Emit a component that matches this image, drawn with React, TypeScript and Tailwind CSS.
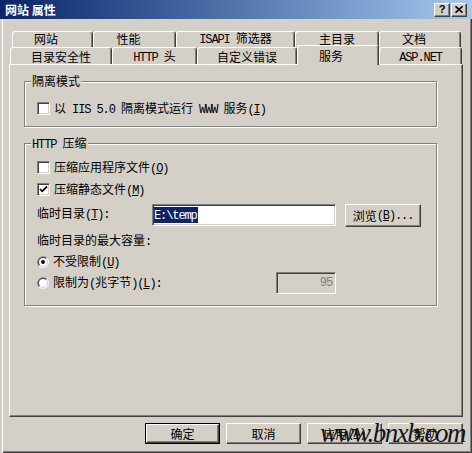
import React from "react";

const MONO = "font-['Liberation_Mono',monospace] text-[12px] tracking-[-1.1px]";

function mn(seg: string) {
  const i = seg.indexOf("&");
  if (i < 0) return seg;
  return (
    <>
      {seg.slice(0, i)}
      <u className="underline decoration-1 underline-offset-[1px]">{seg[i + 1]}</u>
      {seg.slice(i + 2)}
    </>
  );
}

function T({ s }: { s: string }) {
  const parts = s.match(/[\x00-\xff]+|[^\x00-\xff]+/g) || [];
  return (
    <>
      {parts.map((p, k) =>
        /^[\x00-\xff]/.test(p) ? (
          <span key={k} className={MONO}>
            {mn(p)}
          </span>
        ) : (
          <span key={k}>{mn(p)}</span>
        )
      )}
    </>
  );
}

const RAISED =
  "border border-t-white border-l-white border-r-[#404040] border-b-[#404040] shadow-[inset_-1px_-1px_#808080] bg-[#d4d0c8]";
const SUNKEN =
  "border border-t-[#808080] border-l-[#808080] border-b-white border-r-white shadow-[inset_1px_1px_#404040,inset_-1px_-1px_#d4d0c8]";

function Tab({ label, cls }: { label: string; cls: string }) {
  return (
    <div
      className={`${cls} flex items-center justify-center whitespace-pre border-l border-t border-r border-l-white border-t-white border-r-[#404040] rounded-t-[3px] shadow-[inset_-1px_0_#808080] bg-[#d4d0c8] leading-[14px]`}
    >
      <span>
        <T s={label} />
      </span>
    </div>
  );
}

function CheckBox({ checked }: { checked?: boolean }) {
  return (
    <div className={`w-[13px] h-[13px] shrink-0 bg-white ${SUNKEN} flex items-center justify-center`}>
      {checked && (
        <svg width="9" height="9" viewBox="0 0 9 9">
          <path d="M1 4 L3.2 6.3 L8 1.5" stroke="#000" strokeWidth="1.8" fill="none" />
        </svg>
      )}
    </div>
  );
}

function Radio({ checked }: { checked?: boolean }) {
  return (
    <svg width="12" height="12" viewBox="0 0 12 12" className="shrink-0">
      <path d="M1.76 10.24 A6 6 0 0 1 10.24 1.76 Z" fill="#808080" />
      <path d="M10.24 1.76 A6 6 0 0 1 1.76 10.24 Z" fill="#ffffff" />
      <path d="M2.46 9.54 A5 5 0 0 1 9.54 2.46 Z" fill="#404040" />
      <path d="M9.54 2.46 A5 5 0 0 1 2.46 9.54 Z" fill="#d4d0c8" />
      <circle cx="6" cy="6" r="4" fill="#ffffff" />
      {checked && <circle cx="6" cy="6" r="1.9" fill="#000" />}
    </svg>
  );
}

function Btn({ label, def }: { label: string; def?: boolean }) {
  if (def) {
    return (
      <div className="w-[75px] h-[21px] border border-black">
        <div className={`w-full h-full ${RAISED} flex items-center justify-center leading-[14px] whitespace-pre`}>
          <T s={label} />
        </div>
      </div>
    );
  }
  return (
    <div className={`w-[75px] h-[21px] ${RAISED} flex items-center justify-center leading-[14px] whitespace-pre`}>
      <T s={label} />
    </div>
  );
}

export default function App() {
  return (
    <div className="relative w-[472px] h-[453px] overflow-hidden bg-[#d4d0c8] text-[12px] text-black font-['Noto_Sans_CJK_SC',sans-serif] shadow-[inset_2px_2px_#d4d0c8,inset_3px_3px_#ffffff,inset_-1px_-1px_#404040,inset_-2px_-2px_#808080]">
      {/* Title bar */}
      <div className="h-[19px] bg-linear-to-r from-[#0a246a] to-[#a6caf0] flex items-center justify-between pl-[5px] pr-[5px]">
        <span className="text-white font-bold leading-[14px] whitespace-pre">网站 属性</span>
        <div className="flex items-center">
          <div className={`w-[16px] h-[14px] ${RAISED} flex items-center justify-center`}>
            <span className="font-['Liberation_Sans',sans-serif] font-bold text-[11px] leading-none">?</span>
          </div>
          <div className={`ml-[1px] w-[16px] h-[14px] ${RAISED} flex items-center justify-center`}>
            <svg width="8" height="7" viewBox="0 0 8 7">
              <path d="M0.5 0.3 L7.5 6.7 M7.5 0.3 L0.5 6.7" stroke="#000" strokeWidth="1.6" />
            </svg>
          </div>
        </div>
      </div>

      {/* Tabs + panel */}
      <div className="pl-[9px] pt-[12px]">
        <div className="flex h-[16px] ml-[3px]">
          <Tab label="网站" cls="w-[81px] h-[16px] pb-[1px] pr-[13px]" />
          <Tab label="性能" cls="w-[83px] h-[16px] pb-[1px] pr-[12px]" />
          <Tab label="ISAPI 筛选器" cls="w-[119px] h-[16px] pb-[1px]" />
          <Tab label="主目录" cls="w-[84px] h-[16px] pb-[1px]" />
          <Tab label="文档" cls="w-[82px] h-[16px] pb-[1px] pr-[12px]" />
        </div>
        <div className="flex items-end h-[17px] ml-[1px]">
          <Tab label="目录安全性" cls="w-[102px] h-[17px] pt-[2px]" />
          <Tab label="HTTP 头" cls="w-[85px] h-[17px] pt-[2px]" />
          <Tab label="自定义错误" cls="w-[100px] h-[17px] pt-[2px]" />
          <Tab label="服务" cls="w-[82px] h-[20px] mb-[-1px] relative z-10 pr-[14px]" />
          <Tab label="ASP.NET" cls="w-[83px] h-[17px] pt-[2px]" />
        </div>

        <div className="w-[454px] h-[353px] border border-t-white border-l-white border-r-[#404040] border-b-[#404040] shadow-[inset_-1px_-1px_#808080] pl-[14px] pt-[16px]">
          {/* Group 1 */}
          <div className="relative w-[413px] h-[46px] border border-[#808080] shadow-[inset_1px_1px_#ffffff,1px_1px_#ffffff] pl-[12px] pt-[20px]">
            <span className="absolute -top-[8px] left-[6px] px-[1px] bg-[#d4d0c8] leading-[14px] whitespace-pre">
              <T s="隔离模式" />
            </span>
            <div className="flex items-center h-[13px]">
              <CheckBox />
              <span className="ml-[4px] leading-[14px] whitespace-pre">
                <T s="以 IIS 5.0 隔离模式运行 WWW 服务(&I)" />
              </span>
            </div>
          </div>

          {/* Group 2 */}
          <div className="relative mt-[16px] w-[413px] h-[163px] border border-[#808080] shadow-[inset_1px_1px_#ffffff,1px_1px_#ffffff] pl-[12px] pt-[17px]">
            <span className="absolute -top-[8px] left-[6px] px-[1px] bg-[#d4d0c8] leading-[14px] whitespace-pre">
              <T s="HTTP 压缩" />
            </span>
            <div className="flex items-center h-[13px]">
              <CheckBox />
              <span className="ml-[4px] leading-[14px] whitespace-pre">
                <T s="压缩应用程序文件(&O)" />
              </span>
            </div>
            <div className="flex items-center h-[13px] mt-[9px]">
              <CheckBox checked />
              <span className="ml-[4px] leading-[14px] whitespace-pre">
                <T s="压缩静态文件(&M)" />
              </span>
            </div>
            <div className="flex items-start mt-[8px]">
              <div className="w-[115px] mt-[2px] leading-[14px] whitespace-pre">
                <T s="临时目录(&T):" />
              </div>
              <div className={`w-[184px] h-[22px] bg-white ${SUNKEN} flex items-center pl-[1px]`}>
                <span className="bg-[#0a246a] text-white leading-[13px] whitespace-pre pr-[1px]">
                  <T s="E:\temp" />
                </span>
              </div>
              <div className={`ml-[9px] w-[76px] h-[23px] ${RAISED} flex items-center justify-center leading-[14px] whitespace-pre`}>
                <T s="浏览(&B)..." />
              </div>
            </div>
            <div className="mt-[6px] h-[14px] leading-[14px] whitespace-pre">
              <T s="临时目录的最大容量:" />
            </div>
            <div className="mt-[8px] h-[14px] flex items-center">
              <Radio checked />
              <span className="ml-[4px] leading-[14px] whitespace-pre">
                <T s="不受限制(&U)" />
              </span>
            </div>
            <div className="mt-[3px] h-[22px] flex items-center">
              <Radio />
              <span className="ml-[4px] w-[223px] leading-[14px] whitespace-pre">
                <T s="限制为(兆字节)(&L):" />
              </span>
              <div className={`w-[60px] h-[22px] ${SUNKEN} flex items-center justify-end pr-[3px] text-[#808080]`}>
                <T s="95" />
              </div>
            </div>
          </div>
        </div>
      </div>

      {/* Bottom buttons */}
      <div className="flex gap-[6px] pl-[145px] mt-[6px]">
        <Btn label="确定" def />
        <Btn label="取消" />
        <Btn label="应用(&A)" />
        <Btn label="帮助" />
      </div>

      {/* Watermark */}
      <span className="absolute left-[320px] top-[420px] font-['Liberation_Serif',serif] italic text-[27px] tracking-[-1.5px] leading-none text-[#141414] whitespace-nowrap">
        www.bnxb.com
      </span>
    </div>
  );
}
